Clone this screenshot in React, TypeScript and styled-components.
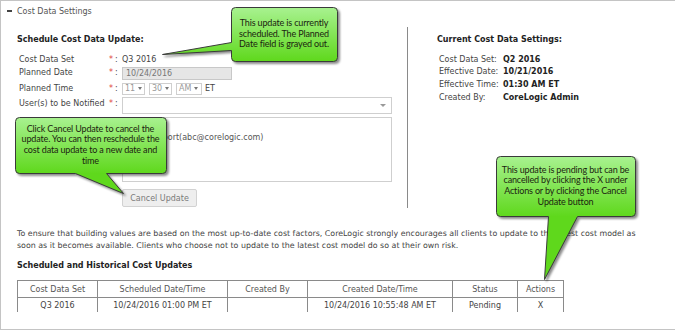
import React from 'react';
import styled, { createGlobalStyle } from 'styled-components';

const GlobalStyle = createGlobalStyle`
  html, body { margin: 0; padding: 0; background: #fff; }
  body {
    font-family: "DejaVu Sans", Verdana, sans-serif;
    font-size: 8px;
    color: #444;
  }
`;

const Panel = styled.div`
  position: relative;
  box-sizing: border-box;
  width: 675px;
  height: 330px;
  border: 1px solid #c4c4c4;
  border-right: none;
  overflow: hidden;
`;

const Header = styled.div`
  display: flex;
  align-items: center;
  height: 20px;
  padding-left: 6px;
  color: #555;
`;

const Dash = styled.span`
  width: 5px;
  height: 2px;
  background: #444;
  margin-right: 5px;
`;

const Content = styled.div`
  padding-left: 16px;
`;

const TopSection = styled.div`
  display: flex;
  height: 181px;
  margin-top: 6px;
`;

const LeftCol = styled.div`
  width: 390px;
  display: flex;
  flex-direction: column;
`;

const Divider = styled.div`
  width: 1px;
  background: #8a8a8a;
`;

const RightCol = styled.div`
  padding-left: 29px;
  display: flex;
  flex-direction: column;
`;

const Heading = styled.div`
  font-weight: bold;
  color: #222;
  line-height: 12px;
  margin-top: 7px;
`;

const Form = styled.div`
  margin-top: 8px;
  margin-left: 2px;
  display: flex;
  flex-direction: column;
`;

const Row = styled.div<{ $h: number; $gap?: number; $top?: boolean }>`
  display: flex;
  align-items: ${(p) => (p.$top ? 'flex-start' : 'center')};
  height: ${(p) => p.$h}px;
  margin-top: ${(p) => p.$gap ?? 0}px;
  line-height: 12px;
`;

const Label = styled.div<{ $top?: boolean }>`
  width: 96px;
  display: flex;
  white-space: nowrap;
  padding-top: ${(p) => (p.$top ? 1 : 0)}px;
`;

const Star = styled.span`
  color: #e0443e;
  margin-left: auto;
  padding-right: 2px;
`;

const Colon = styled.span<{ $top?: boolean }>`
  width: 7px;
  padding-top: ${(p) => (p.$top ? 1 : 0)}px;
`;

const Value = styled.span`
  color: #444;
`;

const DateInput = styled.div`
  box-sizing: border-box;
  width: 110px;
  height: 13px;
  line-height: 11px;
  padding-left: 3px;
  background: #e6e6e6;
  border: 1px solid #c8c8c8;
  color: #777;
`;

const TimeGroup = styled.div`
  display: flex;
  align-items: center;
  gap: 4px;
`;

const MiniSelect = styled.div<{ $w: number }>`
  box-sizing: border-box;
  width: ${(p) => p.$w}px;
  height: 12px;
  border: 1px solid #cfcfcf;
  display: flex;
  align-items: center;
  padding-left: 2px;
  gap: 3px;
  color: #999;
  line-height: 10px;
`;

const Caret = styled.span<{ $big?: boolean }>`
  width: 0;
  height: 0;
  border-left: ${(p) => (p.$big ? 3 : 2)}px solid transparent;
  border-right: ${(p) => (p.$big ? 3 : 2)}px solid transparent;
  border-top: 3px solid ${(p) => (p.$big ? '#999' : '#777')};
`;

const Zone = styled.span`
  margin-left: -1px;
  color: #444;
`;

const WideSelect = styled.div`
  box-sizing: border-box;
  width: 270px;
  height: 17px;
  border: 1px solid #cfcfcf;
  display: flex;
  align-items: center;
  justify-content: flex-end;
  padding-right: 5px;
`;

const ListBox = styled.div`
  box-sizing: border-box;
  width: 270px;
  height: 65px;
  border: 1px solid #cfcfcf;
  padding: 14px 0 0 4px;
  line-height: 12px;
  color: #555;
  white-space: nowrap;
`;

const Spacer = styled.div`
  width: 103px;
`;

const CancelButton = styled.button`
  box-sizing: border-box;
  width: 75px;
  height: 18px;
  padding: 0;
  border: 1px solid #d2d2d2;
  border-radius: 2px;
  background: #eeeeee;
  color: #7a7a7a;
  font-family: "DejaVu Sans", Verdana, sans-serif;
  font-size: 8px;
`;

const Summary = styled.div`
  margin-top: 7.5px;
  margin-left: 2px;
  display: grid;
  grid-template-columns: 64px auto;
  line-height: 12.7px;
  white-space: nowrap;
`;

const SummaryValue = styled.span`
  font-weight: bold;
  color: #222;
`;

const Paragraph = styled.p`
  margin: 20px 0 0 0;
  line-height: 12px;
  font-size: 7.9px;
  color: #444;
  white-space: nowrap;
`;

const SubHeading = styled.div`
  margin-top: 8px;
  font-weight: bold;
  color: #222;
  line-height: 12px;
`;

const Table = styled.table`
  margin-top: 8px;
  border-collapse: collapse;
  table-layout: fixed;
  width: 540px;
`;

const Th = styled.th<{ $w: number }>`
  width: ${(p) => p.$w}px;
  height: 16px;
  padding: 0;
  border: 1px solid #8a8a8a;
  font-weight: normal;
  color: #555;
  text-align: center;
  font-size: 8px;
`;

const Td = styled.td`
  height: 14px;
  padding: 0;
  border-left: 1px solid #8a8a8a;
  border-right: 1px solid #8a8a8a;
  color: #444;
  text-align: center;
  font-size: 8px;
`;

const CalloutBox = styled.div<{ $x: number; $y: number; $w: number; $h: number }>`
  position: absolute;
  left: ${(p) => p.$x}px;
  top: ${(p) => p.$y}px;
  width: ${(p) => p.$w}px;
  height: ${(p) => p.$h}px;
`;

const CalloutShape = styled.svg`
  position: absolute;
  left: 0;
  top: 0;
  overflow: visible;
  filter: drop-shadow(2px 2px 1px rgba(0, 0, 0, 0.45));
`;

const CalloutText = styled.div`
  position: relative;
  height: 100%;
  display: flex;
  align-items: center;
  justify-content: center;
  text-align: center;
  white-space: nowrap;
  font-family: Lato, "Liberation Sans", sans-serif;
  font-size: 9px;
  letter-spacing: -0.15px;
  line-height: 10.7px;
  color: #1b2410;
`;

type CalloutProps = {
  id: string;
  x: number;
  y: number;
  w: number;
  h: number;
  d: string;
  lines: string[];
};

function Callout({ id, x, y, w, h, d, lines }: CalloutProps) {
  return (
    <CalloutBox $x={x} $y={y} $w={w} $h={h}>
      <CalloutShape width={w} height={h}>
        <defs>
          <linearGradient id={id} x1="0" y1="0" x2="0" y2={h} gradientUnits="userSpaceOnUse">
            <stop offset="0" stopColor="#a8f290" />
            <stop offset="1" stopColor="#5fd81c" />
          </linearGradient>
        </defs>
        <path d={d} fill={`url(#${id})`} stroke="#3a3a3a" strokeWidth={1} transform="translate(0.5 0.5)" />
      </CalloutShape>
      <CalloutText>
        <div>
          {lines.map((l, i) => (
            <div key={i}>{l}</div>
          ))}
        </div>
      </CalloutText>
    </CalloutBox>
  );
}

const columns = [
  { title: 'Cost Data Set', w: 79 },
  { title: 'Scheduled Date/Time', w: 129 },
  { title: 'Created By', w: 79 },
  { title: 'Created Date/Time', w: 144 },
  { title: 'Status', w: 64 },
  { title: 'Actions', w: 45 },
];

const rows = [
  ['Q3 2016', '10/24/2016 01:00 PM ET', '', '10/24/2016 10:55:48 AM ET', 'Pending', 'X'],
];

export default function App() {
  return (
    <>
      <GlobalStyle />
      <Panel>
        <Header>
          <Dash />
          <span>Cost Data Settings</span>
        </Header>
        <Content>
          <TopSection>
            <LeftCol>
              <Heading>Schedule Cost Data Update:</Heading>
              <Form>
                <Row $h={12}>
                  <Label>Cost Data Set<Star>*</Star></Label>
                  <Colon>:</Colon>
                  <Value>Q3 2016</Value>
                </Row>
                <Row $h={14}>
                  <Label>Planned Date<Star>*</Star></Label>
                  <Colon>:</Colon>
                  <DateInput>10/24/2016</DateInput>
                </Row>
                <Row $h={13} $gap={2}>
                  <Label>Planned Time<Star>*</Star></Label>
                  <Colon>:</Colon>
                  <TimeGroup>
                    <MiniSelect $w={23}>11<Caret /></MiniSelect>
                    <MiniSelect $w={23}>30<Caret /></MiniSelect>
                    <MiniSelect $w={26}>AM<Caret /></MiniSelect>
                    <Zone>ET</Zone>
                  </TimeGroup>
                </Row>
                <Row $h={18} $gap={2} $top>
                  <Label $top>User(s) to be Notified<Star>*</Star></Label>
                  <Colon $top>:</Colon>
                  <WideSelect><Caret $big /></WideSelect>
                </Row>
                <Row $h={65} $gap={2}>
                  <Spacer />
                  <ListBox>Tech Support(abc@corelogic.com)</ListBox>
                </Row>
                <Row $h={18} $gap={7}>
                  <Spacer />
                  <CancelButton type="button">Cancel Update</CancelButton>
                </Row>
              </Form>
            </LeftCol>
            <Divider />
            <RightCol>
              <Heading>Current Cost Data Settings:</Heading>
              <Summary>
                <span>Cost Data Set:</span>
                <SummaryValue>Q2 2016</SummaryValue>
                <span>Effective Date:</span>
                <SummaryValue>10/21/2016</SummaryValue>
                <span>Effective Time:</span>
                <SummaryValue>01:30 AM ET</SummaryValue>
                <span>Created By:</span>
                <SummaryValue>CoreLogic Admin</SummaryValue>
              </Summary>
            </RightCol>
          </TopSection>
          <Paragraph>
            To ensure that building values are based on the most up-to-date cost factors, CoreLogic strongly encourages all clients to update to the latest cost model as
            <br />
            soon as it becomes available. Clients who choose not to update to the latest cost model do so at their own risk.
          </Paragraph>
          <SubHeading>Scheduled and Historical Cost Updates</SubHeading>
          <Table>
            <thead>
              <tr>
                {columns.map((c) => (
                  <Th key={c.title} $w={c.w}>{c.title}</Th>
                ))}
              </tr>
            </thead>
            <tbody>
              {rows.map((r, i) => (
                <tr key={i}>
                  {r.map((cell, j) => (
                    <Td key={j}>{cell}</Td>
                  ))}
                </tr>
              ))}
            </tbody>
          </Table>
        </Content>

        <Callout
          id="g1"
          x={230}
          y={6}
          w={106}
          h={54}
          d="M4,0 H102 Q106,0 106,4 V50 Q106,54 102,54 H4 Q0,54 0,50 V43 L-69,47 L0,35 V4 Q0,0 4,0 Z"
          lines={['This update is currently', 'scheduled. The Planned', 'Date field is grayed out.']}
        />
        <Callout
          id="g2"
          x={14}
          y={116}
          w={151}
          h={56}
          d="M4,0 H147 Q151,0 151,4 V52 Q151,56 147,56 H91 L108,76 L60,56 H4 Q0,56 0,52 V4 Q0,0 4,0 Z"
          lines={['Click Cancel Update to cancel the', 'update. You can then reschedule the', 'cost data update to a new date and', 'time']}
        />
        <Callout
          id="g3"
          x={495}
          y={155}
          w={139}
          h={60}
          d="M4,0 H135 Q139,0 139,4 V56 Q139,60 135,60 H81 L48,123 L52,60 H4 Q0,60 0,56 V4 Q0,0 4,0 Z"
          lines={['This update is pending but can be', 'cancelled by clicking the X under', 'Actions or by clicking the Cancel', 'Update button']}
        />
      </Panel>
    </>
  );
}
